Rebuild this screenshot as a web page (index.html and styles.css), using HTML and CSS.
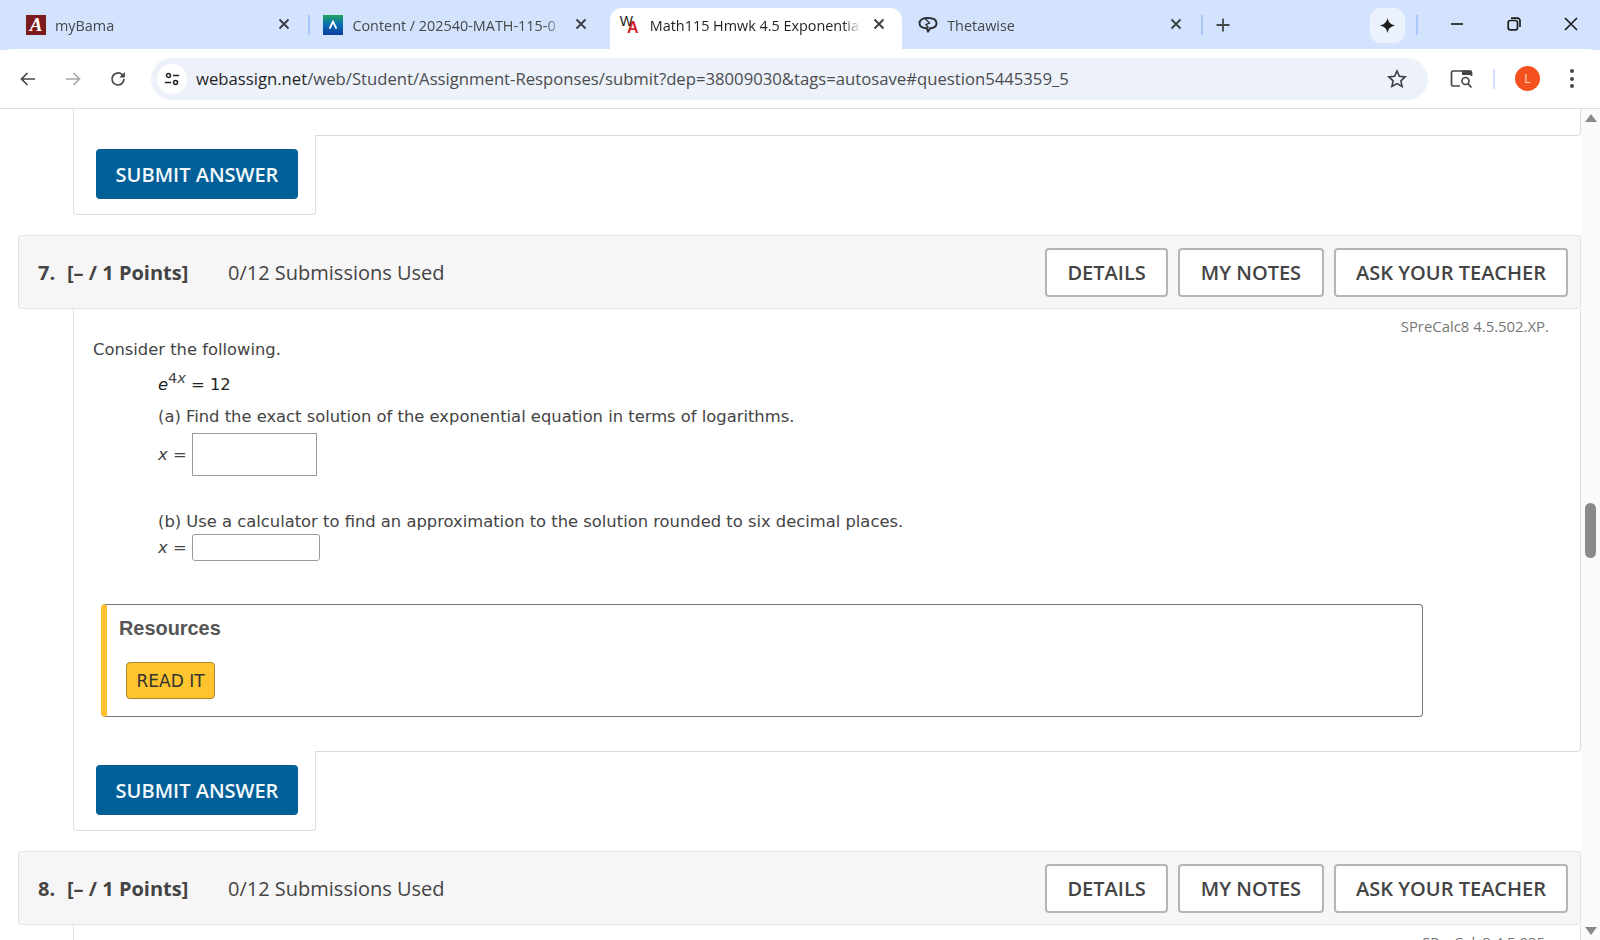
FILE: index.html
```html
<!DOCTYPE html>
<html lang="en">
<head>
<meta charset="utf-8">
<title>Math115 Hmwk 4.5 Exponential</title>
<link rel="stylesheet" href="styles.css">
</head>
<body>
<div class="window">
  <header class="tabstrip">
    <div class="tab">
      <span class="fav fav-bama">A</span>
      <span class="tab-title">myBama</span>
      <span class="tab-x"><svg viewBox="0 0 12 12"><path d="M1.5 1.5l9 9M10.5 1.5l-9 9"/></svg></span>
      <i class="tab-sep"></i>
    </div>
    <div class="tab">
      <svg class="fav" viewBox="0 0 20 20"><defs><linearGradient id="lg" x1="0" y1="0" x2="0" y2="1"><stop offset="0" stop-color="#1fa65a"/><stop offset=".45" stop-color="#0a6fb4"/><stop offset="1" stop-color="#0a3d9c"/></linearGradient></defs><rect width="20" height="20" fill="url(#lg)"/><path d="M6.6 13.6L10 6.6l3.4 7" fill="none" stroke="#fff" stroke-width="1.9"/></svg>
      <span class="tab-title">Content / 202540-MATH-115-0</span>
      <span class="tab-x"><svg viewBox="0 0 12 12"><path d="M1.5 1.5l9 9M10.5 1.5l-9 9"/></svg></span>
    </div>
    <div class="tab tab-active">
      <span class="fav fav-wa"><b class="wa-w">W</b><b class="wa-a">A</b></span>
      <span class="tab-title">Math115 Hmwk 4.5 Exponential</span>
      <span class="tab-x"><svg viewBox="0 0 12 12"><path d="M1.5 1.5l9 9M10.5 1.5l-9 9"/></svg></span>
    </div>
    <div class="tab">
      <svg class="fav" viewBox="0 0 20 20"><path d="M1.500 8.200C1.500 4.600 5 3 10 3s8.500 1.600 8.500 5.200c0 3-3 4.800-6.300 5.100L10 16.800 8.800 13.300C4.600 13 1.500 11.200 1.500 8.200z" fill="none" stroke="#2b2d31" stroke-width="1.900" stroke-linejoin="round"/><path d="M7.500 4l4 4-3.500 1.500 2.500 3.500" fill="none" stroke="#2b2d31" stroke-width="1.300"/></svg>
      <span class="tab-title">Thetawise</span>
      <span class="tab-x"><svg viewBox="0 0 12 12"><path d="M1.5 1.5l9 9M10.5 1.5l-9 9"/></svg></span>
      <i class="tab-sep"></i>
    </div>
    <span class="newtab"><svg viewBox="0 0 14 14"><path d="M7 .5v13M.5 7h13"/></svg></span>
    <span class="spark"><svg viewBox="0 0 20 20"><path d="M10 1c.8 5 3.500 8 9 9-5.500 1-8.200 4-9 9-.8-5-3.500-8-9-9 5.500-1 8.200-4 9-9z"/></svg></span>
    <i class="spark-sep"></i>
    <div class="winctl">
      <svg viewBox="0 0 14 14"><path d="M1 7h12"/></svg>
      <svg viewBox="0 0 14 14"><rect x="1.200" y="3.500" width="9.300" height="9.300" rx="2"/><path d="M4 1.200h6.500a2.500 2.500 0 0 1 2.500 2.500V10"/></svg>
      <svg viewBox="0 0 14 14"><path d="M1 1l12 12M13 1L1 13"/></svg>
    </div>
  </header>

  <nav class="toolbar">
    <svg class="nav-ico" viewBox="0 0 18 18"><path d="M16 9H3M8.500 3L2.500 9l6 6"/></svg>
    <svg class="nav-ico nav-off" viewBox="0 0 18 18"><path d="M2 9h13M9.500 3l6 6-6 6"/></svg>
    <svg class="nav-ico" viewBox="0 0 18 18"><path d="M15 9a6 6 0 1 1-1.800-4.300L15 6.500"/><path class="fill" d="M15.800 2v5.500h-5.500z"/></svg>
    <div class="omnibox">
      <span class="site-btn"><svg viewBox="0 0 18 18"><circle cx="5" cy="5" r="2.200"/><path d="M10 5h7M1 13h7"/><circle cx="13" cy="13" r="2.200"/></svg></span>
      <span class="url"><span class="url-host">webassign.net</span>/web/Student/Assignment-Responses/submit?dep=38009030&amp;tags=autosave#question5445359_5</span>
      <svg class="star" viewBox="0 0 20 20"><path d="M10 2l2.400 5.300 5.800.6-4.300 3.900 1.200 5.700-5.100-2.900-5.100 2.900 1.200-5.700L1.800 7.900l5.800-.6z"/></svg>
    </div>
    <svg class="lens" viewBox="0 0 24 20"><path d="M10 17H3a1.500 1.500 0 0 1-1.500-1.500v-12A1.500 1.500 0 0 1 3 2h17a1.500 1.500 0 0 1 1.500 1.500V7"/><path class="fill" d="M12 1.500h8a2 2 0 0 1 2 2V6H12z"/><circle cx="15.500" cy="12" r="3.500"/><path d="M18 14.800l3.500 3.700"/></svg>
    <i class="tool-sep"></i>
    <span class="avatar">L</span>
    <span class="dots"><i></i><i></i><i></i></span>
  </nav>

  <div class="viewport">
    <main class="page">
      <div class="q-body q-body-tail"></div>
      <div class="q-foot">
        <button class="submit">SUBMIT ANSWER</button>
      </div>

      <section class="question">
        <div class="q-head">
          <span class="q-num">7.</span>
          <span class="q-points">[– / 1 Points]</span>
          <span class="q-subs">0/12 Submissions Used</span>
          <span class="q-actions">
            <button class="act">DETAILS</button>
            <button class="act act-notes">MY NOTES</button>
            <button class="act">ASK YOUR TEACHER</button>
          </span>
        </div>
        <div class="q-body">
          <p class="q-code">SPreCalc8 4.5.502.XP.</p>
          <p class="q-intro">Consider the following.</p>
          <div class="q-work">
            <p class="q-eq"><i class="math">e</i><sup class="math-sup">4<i>x</i></sup> = 12</p>
            <p class="q-text">(a) Find the exact solution of the exponential equation in terms of logarithms.</p>
            <div class="q-ans q-ans-a"><span class="lhs"><i class="math">x</i> =</span><span class="box box-a"></span></div>
            <p class="q-text q-text-b">(b) Use a calculator to find an approximation to the solution rounded to six decimal places.</p>
            <div class="q-ans q-ans-b"><span class="lhs"><i class="math">x</i> =</span><span class="box box-b"></span></div>
          </div>
          <div class="resources">
            <h3 class="res-title">Resources</h3>
            <button class="readit">READ IT</button>
          </div>
        </div>
        <div class="q-foot">
          <button class="submit">SUBMIT ANSWER</button>
        </div>
      </section>

      <section class="question">
        <div class="q-head">
          <span class="q-num">8.</span>
          <span class="q-points">[– / 1 Points]</span>
          <span class="q-subs">0/12 Submissions Used</span>
          <span class="q-actions">
            <button class="act">DETAILS</button>
            <button class="act act-notes">MY NOTES</button>
            <button class="act">ASK YOUR TEACHER</button>
          </span>
        </div>
        <div class="q-body">
          <p class="q-code">SPreCalc8 4.5.035.</p>
        </div>
      </section>
    </main>
    <aside class="scrollbar">
      <i class="arrow-up"></i>
      <span class="thumb"></span>
      <i class="arrow-down"></i>
    </aside>
  </div>
</div>
</body>
</html>
```

FILE: styles.css
```css
* { box-sizing: border-box; }
html, body { margin: 0; height: 100%; overflow: hidden; background: #fff; }
.window { width: 1600px; height: 940px; display: flex; flex-direction: column; font-family: "Open Sans", sans-serif; }

/* tab strip */
.tabstrip { height: 50px; flex: none; background: #d3e3fd; display: flex; align-items: flex-start; padding-left: 14px; }
.tab { width: 297.400px; height: 42px; margin-top: 8px; padding: 0 0 8px 12px; display: flex; align-items: center; position: relative; flex: none; }
.tab-active { width: 292px; margin-left: 1px; margin-right: 4.400px; padding-left: 11px; background: #fff; border-radius: 12px 12px 0 0; }
.fav { width: 20px; height: 20px; flex: none; }
.fav-bama { background: #7c1a1c; color: #fff; font: italic bold 19px/20px "Liberation Serif", serif; text-align: center; display: block; }
.fav-wa { display: block; white-space: nowrap; line-height: 20px; }
.wa-w { position: relative; top: -5px; left: -1px; font: 14px/14px "Liberation Sans", sans-serif; color: #222; }
.wa-a { position: relative; top: 2px; margin-left: -7px; font: bold 16px/16px "Liberation Sans", sans-serif; color: #d6202a; }
.tab-title { margin-left: 9px; width: 215px; white-space: nowrap; overflow: hidden; font-size: 14.400px; color: #45474a; -webkit-mask-image: linear-gradient(90deg, #000 90%, transparent 98%); mask-image: linear-gradient(90deg, #000 90%, transparent 98%); }
.tab-active .tab-title { color: #1f1f1f; }
.tab-x { margin-left: 8px; margin-top: -2px; width: 12px; height: 12px; display: block; }
.tab-x svg { display: block; fill: none; stroke: #3a3c40; stroke-width: 1.8; }
.tab-sep { position: absolute; right: 1px; top: 7px; width: 2px; height: 20px; background: #a8c7fa; }
.newtab { width: 14px; height: 14px; margin: 18px 0 0 12px; flex: none; }
.newtab svg { display: block; fill: none; stroke: #45474a; stroke-width: 1.8; }
.spark { width: 35px; height: 35px; margin: 8px 0 0 140px; background: #ecf2fd; border-radius: 11px; display: flex; align-items: center; justify-content: center; flex: none; }
.spark svg { width: 17px; height: 17px; fill: #1f1f1f; }
.spark-sep { width: 2px; height: 20px; margin: 15px 0 0 11px; background: #a8c7fa; flex: none; }
.winctl { margin: 17px 0 0 32px; display: flex; gap: 43px; }
.winctl svg { width: 14px; height: 14px; fill: none; stroke: #1f1f1f; stroke-width: 1.7; }

/* toolbar */
.toolbar { height: 60px; flex: none; background: #fff; border-bottom: 1px solid #dcdde0; display: flex; align-items: center; padding-left: 19px; border-radius: 12px 12px 0 0; margin-top: -1px; position: relative; }
.nav-ico { width: 18px; height: 18px; margin-right: 27px; fill: none; stroke: #45474a; stroke-width: 1.7; flex: none; }
.nav-ico .fill { fill: #45474a; stroke: none; }
.nav-off { stroke: #a6a8ab; }
.omnibox { width: 1277px; height: 42px; margin-left: -3px; background: #edf2fa; border-radius: 21px; display: flex; align-items: center; padding-left: 6px; flex: none; }
.site-btn { width: 30px; height: 30px; border-radius: 50%; background: #fff; display: flex; align-items: center; justify-content: center; flex: none; }
.site-btn svg { width: 16px; height: 16px; fill: none; stroke: #1f1f1f; stroke-width: 1.7; }
.url { margin-left: 9px; width: 1182px; font-size: 16.700px; color: #4a4c4f; white-space: nowrap; }
.url-host { color: #1f1f1f; }
.star { width: 20px; height: 20px; margin-left: 9px; fill: none; stroke: #3a3c40; stroke-width: 1.6; flex: none; }
.lens { width: 24px; height: 20px; margin-left: 22px; fill: none; stroke: #45474a; stroke-width: 1.7; flex: none; }
.lens .fill { fill: #45474a; stroke: none; }
.tool-sep { width: 2px; height: 20px; margin-left: 19px; background: #d3e3fd; flex: none; }
.avatar { width: 25px; height: 25px; margin-left: 20px; border-radius: 50%; background: #f4511e; color: #ffd9cc; font-size: 12px; line-height: 25px; text-align: center; flex: none; }
.dots { margin-left: 30px; display: flex; flex-direction: column; gap: 3.500px; }
.dots i { width: 4px; height: 4px; border-radius: 50%; background: #45474a; display: block; }

/* page */
.viewport { flex: 1; display: flex; min-height: 0; overflow: hidden; }
.page { width: 1581px; flex: none; padding-left: 18px; overflow: hidden; }
.scrollbar { flex: 1; background: #fafafa; position: relative; }
.arrow-up, .arrow-down { position: absolute; left: 4px; width: 0; height: 0; border-left: 6px solid transparent; border-right: 6px solid transparent; }
.arrow-up { top: 5px; border-bottom: 8px solid #8a8a8a; }
.arrow-down { bottom: 5px; border-top: 8px solid #8a8a8a; }
.thumb { position: absolute; left: 4px; top: 394px; width: 11px; height: 55px; border-radius: 6px; background: #8a8a8a; }

.question { margin-top: 20px; }
.q-head { height: 74px; background: #f6f6f6; border: 1px solid #e2e2e2; border-radius: 3px; display: flex; align-items: center; padding: 0 12px 0 19px; font-size: 20px; color: #444; }
.q-num { font-weight: 700; width: 29px; }
.q-points { font-weight: 700; width: 161px; letter-spacing: 0; }
.q-subs { flex: 1; }
.q-actions { display: flex; gap: 10px; }
.act { height: 49px; padding: 0 20px; background: #fff; border: 2px solid #b5b5b5; border-radius: 4px; font: 600 20px "Open Sans", sans-serif; color: #444; }
.act-notes { padding: 0 21px; }

.q-body { margin-left: 55px; border: 1px solid #ddd; border-top: none; border-bottom-right-radius: 4px; padding: 0 0 0 19px; height: 443px; position: relative; font: 16.350px/1 "DejaVu Sans", sans-serif; color: #444; background: #fff; }
.q-body-tail { height: 27px; border-top: none; }
.q-code { margin: 0; padding-top: 7px; padding-right: 31px; text-align: right; font: 14.900px/20px "Open Sans", sans-serif; color: #777; }
.q-intro { margin: 4px 0 0; line-height: 20px; }
.q-work { padding-left: 65px; }
.q-eq { margin: 14px 0 0; color: #222; line-height: 22px; }
.math { font-style: italic; }
.math-sup { font-size: 14.500px; line-height: 0; vertical-align: 7px; color: #444; }
.q-text { margin: 11px 0 0; line-height: 20px; }
.q-ans { display: flex; align-items: center; }
.q-ans-a { margin-top: 6px; }
.q-ans-b { margin-top: 2px; }
.q-text-b { margin-top: 36px; }
.lhs { width: 34px; flex: none; padding-top: 2px; }
.box { display: block; background: #fff; border: 1px solid #9a9a9a; flex: none; }
.box-a { width: 125px; height: 43px; }
.box-b { width: 128px; height: 27px; border-radius: 3px; }

.resources { position: absolute; left: 27px; top: 295px; width: 1322px; height: 113px; border: 1px solid #777; border-left: 6px solid #ffc12e; border-radius: 4px; padding: 11px 0 0 12px; }
.res-title { margin: 0; font: bold 19.900px/24px "Liberation Sans", sans-serif; color: #555; }
.readit { display: block; margin: 22px 0 0 7px; width: 89px; height: 37px; padding: 0; background: #ffc42e; border: 1px solid #a8852e; border-radius: 4px; font: 17px "DejaVu Sans", sans-serif; color: #333; }

.q-foot { margin-left: 55px; width: 243px; height: 80px; margin-top: -1px; background: #fff; border: 1px solid #ddd; border-top: none; border-radius: 0 0 4px 4px; padding: 14px 0 0 22px; position: relative; }
.submit { display: block; width: 202px; height: 50px; padding: 0; background: #005f96; border: none; border-radius: 4px; color: #f4f8fb; font: 600 20px "Open Sans", sans-serif; }
```
